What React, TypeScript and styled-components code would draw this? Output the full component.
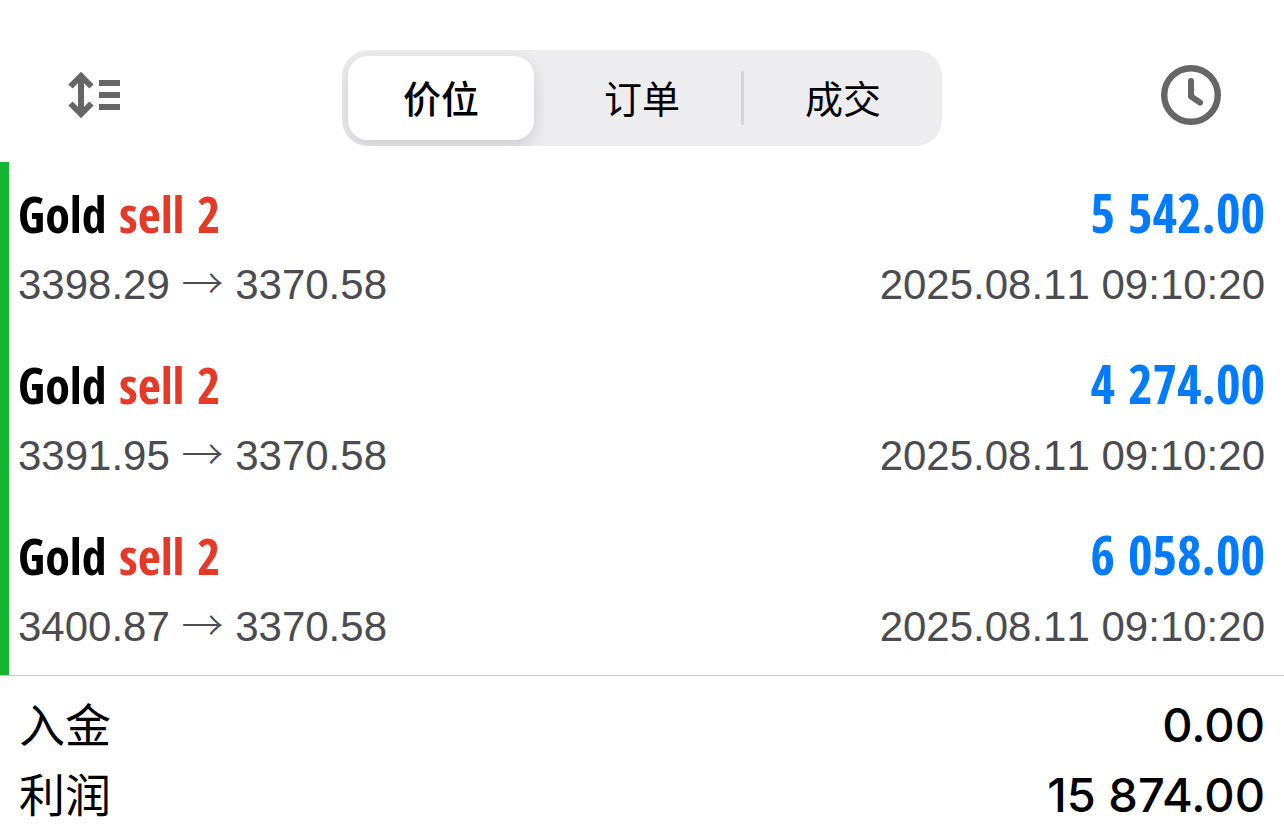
import React, { useState } from "react";
import styled, { createGlobalStyle } from "styled-components";

const GlobalStyle = createGlobalStyle`
  * { box-sizing: border-box; }
  body {
    margin: 0;
    background: #fff;
    color: #000;
    font-family: "Liberation Sans", "Noto Sans CJK SC", sans-serif;
  }
`;

const Toolbar = styled.header`
  display: grid;
  grid-template-columns: 1fr minmax(0, 600px) 1fr;
  align-items: center;
  padding: 50px 60px 16px;
`;

const IconButton = styled.button<{ $end?: boolean }>`
  display: flex;
  justify-self: ${(p) => (p.$end ? "end" : "start")};
  padding: 0;
  border: 0;
  background: none;
  color: #666;
  cursor: pointer;
`;

const Segmented = styled.div`
  display: flex;
  align-items: center;
  height: 96px;
  padding: 6px;
  border-radius: 26px;
  background: #ededef;
  overflow: hidden;
`;

const Segment = styled.button<{ $active: boolean }>`
  flex: 1;
  height: 84px;
  padding: 0 0 2px;
  border: 0;
  border-radius: 20px;
  background: ${(p) => (p.$active ? "#fff" : "transparent")};
  box-shadow: ${(p) => (p.$active ? "0 6px 18px rgba(0, 0, 30, 0.14)" : "none")};
  color: #000;
  font: ${(p) => (p.$active ? 500 : 400)} 38px/82px "Noto Sans CJK SC", sans-serif;
  cursor: pointer;
`;

const Separator = styled.span<{ $hidden: boolean }>`
  width: 3px;
  height: 54px;
  margin: 0 6px;
  border-radius: 2px;
  background: ${(p) => (p.$hidden ? "transparent" : "#d5d5d8")};
`;

const DealList = styled.ul`
  margin: 0;
  padding: 0;
  list-style: none;
  border-left: 9px solid #16b531;
`;

const Deal = styled.li`
  padding: 21px 19px 21px 9px;
`;

const Line = styled.div`
  display: flex;
  justify-content: space-between;
  align-items: baseline;
`;

const Headline = styled(Line)`
  height: 60px;
  font: 700 50px/60px "Open Sans Condensed", "Roboto Condensed", sans-serif;
`;

const Detail = styled(Line)`
  padding-top: 15px;
  color: #4c4b52;
  font-size: 42px;
  font-kerning: none;
  line-height: 54px;
`;

const Side = styled.span`
  color: #e63a29;
`;

const Profit = styled.span`
  color: #007aff;
  font-size: 53px;
`;

const Arrow = styled.span`
  font-family: "Noto Sans CJK SC", sans-serif;
  font-weight: 300;
  line-height: 1;
`;

const Summary = styled.dl`
  margin: 0;
  padding: 14px 19px 0;
  border-top: 1px solid #c8c7cc;
`;

const SummaryRow = styled.div`
  display: flex;
  justify-content: space-between;
  align-items: center;
  height: 70px;
`;

const Label = styled.dt`
  padding-bottom: 6px;
  font: 400 46px/64px "Noto Sans CJK SC", sans-serif;
`;

const Amount = styled.dd`
  margin: 0;
  font: 500 47px/70px Inter, sans-serif;
`;

const SortIcon = () => (
  <svg width="70" height="66" viewBox="60 65 70 66" aria-hidden="true">
    <g fill="none" stroke="currentColor" strokeWidth="6">
      <path d="M81 76v38" />
      <path d="M70.500 86.500 81 76l10.500 10.500M70.500 103.500 81 114l10.500-10.500" />
      <path d="M99 83h21M99 95h21M99 107h21" />
    </g>
  </svg>
);

const ClockIcon = () => (
  <svg width="66" height="66" viewBox="0 0 66 66" aria-hidden="true">
    <g fill="none" stroke="currentColor" strokeWidth="6" strokeLinecap="round" strokeLinejoin="round">
      <circle cx="33" cy="30" r="26.800" strokeWidth="6.400" />
      <path d="M33 16v15.500l9 6" />
    </g>
  </svg>
);

const tabs = ["价位", "订单", "成交"];

const deals = [
  { open: "3398.29", close: "3370.58", profit: "5 542.00" },
  { open: "3391.95", close: "3370.58", profit: "4 274.00" },
  { open: "3400.87", close: "3370.58", profit: "6 058.00" },
];

const totals = [
  { label: "入金", amount: "0.00" },
  { label: "利润", amount: "15 874.00" },
];

export default function App() {
  const [active, setActive] = useState(0);
  return (
    <>
      <GlobalStyle />
      <Toolbar>
        <IconButton aria-label="排序">
          <SortIcon />
        </IconButton>
        <Segmented role="group">
          {tabs.map((tab, i) => (
            <React.Fragment key={tab}>
              {i > 0 && <Separator $hidden={active === i || active === i - 1} />}
              <Segment $active={active === i} aria-pressed={active === i} onClick={() => setActive(i)}>
                {tab}
              </Segment>
            </React.Fragment>
          ))}
        </Segmented>
        <IconButton $end aria-label="历史">
          <ClockIcon />
        </IconButton>
      </Toolbar>
      <main>
        <DealList>
          {deals.map((deal) => (
            <Deal key={deal.open}>
              <Headline>
                <span>
                  Gold <Side>sell 2</Side>
                </span>
                <Profit>{deal.profit}</Profit>
              </Headline>
              <Detail>
                <span>
                  {deal.open} <Arrow>→</Arrow> {deal.close}
                </span>
                <time dateTime="2025-08-11T09:10:20">2025.08.11 09:10:20</time>
              </Detail>
            </Deal>
          ))}
        </DealList>
        <Summary>
          {totals.map((row) => (
            <SummaryRow key={row.label}>
              <Label>{row.label}</Label>
              <Amount>{row.amount}</Amount>
            </SummaryRow>
          ))}
        </Summary>
      </main>
    </>
  );
}
